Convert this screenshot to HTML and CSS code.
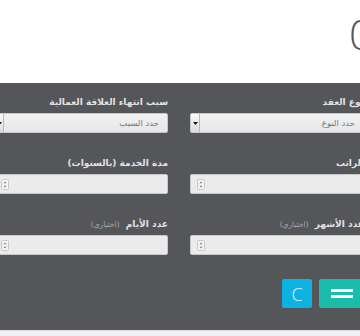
FILE: index.html
```html
<!DOCTYPE html>
<html lang="ar">
<head>
<meta charset="utf-8">
<title>حاسبة نهاية الخدمة</title>
<link rel="stylesheet" href="styles.css">
</head>
<body>
<div class="page">
  <header class="top"><span class="big">0</span></header>
  <section class="panel">
    <div class="form">
      <div class="field">
        <div class="lbl">نوع العقد</div>
        <div class="select"><span class="val">حدد النوع</span><span class="arrow"><svg width="5" height="3" viewBox="0 0 5 3"><path d="M0 0H5L2.5 3Z" fill="#111"/></svg></span></div>
      </div>
      <div class="field">
        <div class="lbl">سبب انتهاء العلاقة العمالية</div>
        <div class="select"><span class="val">حدد السبب</span><span class="arrow"><svg width="5" height="3" viewBox="0 0 5 3"><path d="M0 0H5L2.5 3Z" fill="#111"/></svg></span></div>
      </div>
      <div class="field">
        <div class="lbl">الراتب</div>
        <div class="input"><span class="spin"><svg width="8" height="11" viewBox="0 0 8 11"><rect x="0.5" y="0.5" width="7" height="10" rx="1" fill="#f4f4f4" stroke="#c9c9c9"/><path d="M2.5 4.2H5.5L4 2.4Z" fill="#6d7f99"/><path d="M2.5 6.8H5.5L4 8.6Z" fill="#6d7f99"/></svg></span></div>
      </div>
      <div class="field">
        <div class="lbl">مدة الخدمة (بالسنوات)</div>
        <div class="input"><span class="spin"><svg width="8" height="11" viewBox="0 0 8 11"><rect x="0.5" y="0.5" width="7" height="10" rx="1" fill="#f4f4f4" stroke="#c9c9c9"/><path d="M2.5 4.2H5.5L4 2.4Z" fill="#6d7f99"/><path d="M2.5 6.8H5.5L4 8.6Z" fill="#6d7f99"/></svg></span></div>
      </div>
      <div class="field">
        <div class="lbl">عدد الأشهر <span class="opt">(اختياري)</span></div>
        <div class="input"><span class="spin"><svg width="8" height="11" viewBox="0 0 8 11"><rect x="0.5" y="0.5" width="7" height="10" rx="1" fill="#f4f4f4" stroke="#c9c9c9"/><path d="M2.5 4.2H5.5L4 2.4Z" fill="#6d7f99"/><path d="M2.5 6.8H5.5L4 8.6Z" fill="#6d7f99"/></svg></span></div>
      </div>
      <div class="field">
        <div class="lbl">عدد الأيام <span class="opt">(اختياري)</span></div>
        <div class="input"><span class="spin"><svg width="8" height="11" viewBox="0 0 8 11"><rect x="0.5" y="0.5" width="7" height="10" rx="1" fill="#f4f4f4" stroke="#c9c9c9"/><path d="M2.5 4.2H5.5L4 2.4Z" fill="#6d7f99"/><path d="M2.5 6.8H5.5L4 8.6Z" fill="#6d7f99"/></svg></span></div>
      </div>
    </div>
    <div class="actions">
      <button class="btn calc" type="button" aria-label="="><span class="bar"></span><span class="bar"></span></button>
      <button class="btn clear" type="button">C</button>
    </div>
  </section>
  <footer class="foot"></footer>
</div>
</body>
</html>
```

FILE: styles.css
```css
html, body {
  margin: 0;
  padding: 0;
  background: #ffffff;
}
body {
  width: 360px;
  height: 336px;
  overflow: hidden;
  font-family: "DejaVu Sans", "Noto Sans", sans-serif;
}
.page {
  width: 360px;
  overflow: hidden;
}
.top {
  height: 83px;
  box-sizing: border-box;
  padding-top: 13px;
  display: flex;
  justify-content: flex-end;
  background: #ffffff;
}
.big {
  font-family: "Open Sans", sans-serif;
  font-weight: 300;
  font-size: 42px;
  line-height: 42px;
  color: #555555;
  margin-right: -13px;
}
.panel {
  direction: rtl;
  background: #55565a;
  padding: 13px 0 22px;
}
.form {
  width: 370px;
  margin-right: -4px;
  display: grid;
  grid-template-columns: 174px 174px;
  column-gap: 22px;
  row-gap: 24px;
}
.lbl {
  font-size: 9px;
  line-height: 13px;
  height: 13px;
  font-weight: bold;
  color: #e2e2e2;
  margin-bottom: 4px;
  white-space: nowrap;
}
.opt {
  font-weight: normal;
  font-size: 7.5px;
  color: #a9a9ab;
  margin-right: 3px;
}
.select, .input {
  height: 20px;
  box-sizing: border-box;
  border: 1px solid #c8c8c8;
  border-radius: 2px;
  background: #ebebeb;
  display: flex;
  align-items: center;
}
.select {
  background: linear-gradient(#f2f2f2, #e6e6e6);
}
.val {
  flex: 1;
  padding-right: 8px;
  font-size: 8.5px;
  color: #777777;
}
.arrow {
  width: 9px;
  height: 18px;
  box-sizing: border-box;
  border-right: 1px solid #b9b9b9;
  background: linear-gradient(#fafafa, #dcdcdc);
  display: flex;
  align-items: center;
  justify-content: center;
}
.arrow svg { display: block; }
.input {
  justify-content: flex-end;
  padding-left: 6px;
}
.spin { display: flex; }
.spin svg { display: block; }
.actions {
  margin-top: 24px;
  margin-right: -4px;
  display: flex;
  gap: 7px;
}
.btn {
  height: 29px;
  border: 0;
  border-radius: 2px;
  padding: 0;
  margin: 0;
  display: flex;
  flex-direction: column;
  align-items: center;
  justify-content: center;
  cursor: pointer;
}
.calc {
  width: 45px;
  background: #1bbcaa;
  gap: 3px;
}
.bar {
  display: block;
  width: 22px;
  height: 3px;
  background: #ffffff;
}
.clear {
  width: 30px;
  background: #0cb3e2;
  color: #e8f7fc;
  font-family: "Open Sans", sans-serif;
  font-weight: 300;
  font-size: 18px;
}
.foot {
  height: 5px;
  border-top: 1px solid #dadada;
  background: #f0f0f0;
}
```
